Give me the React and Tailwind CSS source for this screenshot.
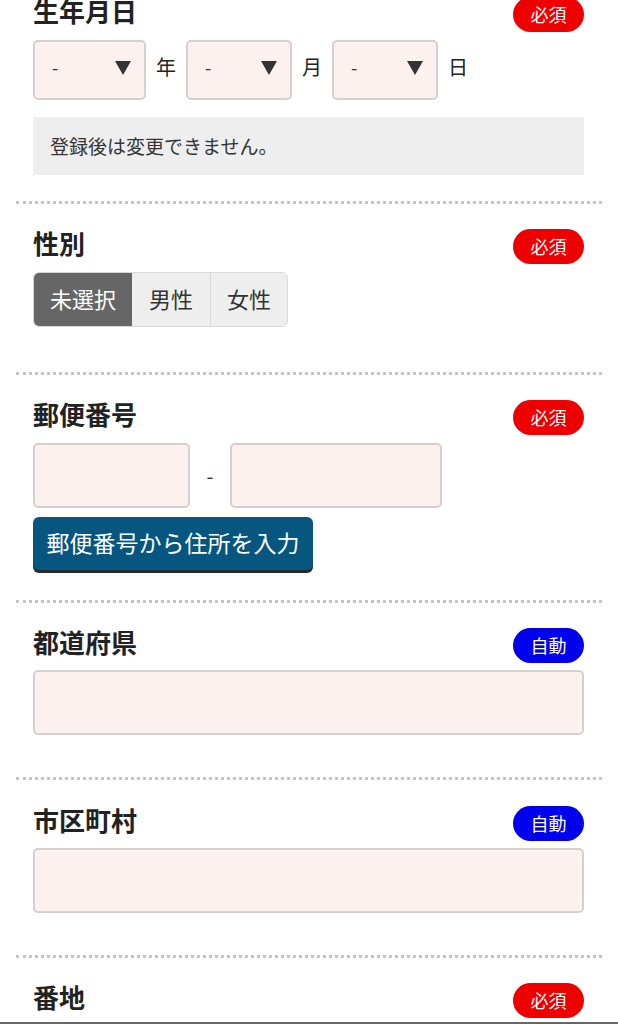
import React from "react";

const font = { fontFamily: '"Noto Sans CJK JP", "Noto Sans", sans-serif' };

const Badge = ({ kind }) => (
  <span
    className={
      "flex h-[35px] w-[71px] items-center justify-center rounded-full text-[18px] text-white " +
      (kind === "auto" ? "bg-[#0000ee]" : "bg-[#ee0000]")
    }
  >
    {kind === "auto" ? "自動" : "必須"}
  </span>
);

const Header = ({ title, kind }) => (
  <div className="flex h-[35px] items-center justify-between">
    <h2 className="pb-[8px] text-[26px] font-bold leading-none text-[#222]">{title}</h2>
    <Badge kind={kind} />
  </div>
);

const Select = ({ w }) => (
  <div
    className={
      "flex h-[60px] items-center justify-between rounded-[5px] border-2 border-[#d6cfcf] bg-[#fdf1f0] pb-[5px] pl-[17px] pr-[13px] " +
      w
    }
  >
    <span className="text-[18px] text-[#333]">-</span>
    <svg width="16" height="14" viewBox="0 0 16 14">
      <polygon points="0,0 16,0 8,14" fill="#333" />
    </svg>
  </div>
);

const Field = ({ w = "w-full" }) => (
  <div className={"h-[65px] rounded-[5px] border-2 border-[#d6cfcf] bg-[#fdf1f0] " + w} />
);

const Section = ({ children, className = "" }) => (
  <section
    className={
      "mx-4 border-t-[3px] border-dotted border-[#c4c4c4] pl-[17px] pr-[18px] " + className
    }
  >
    {children}
  </section>
);

export default function App() {
  return (
    <div className="h-[1024px] overflow-hidden bg-white text-[#222]" style={font}>
      {/* 生年月日 */}
      <section className="mx-4 -mt-[3px] pb-[26px] pl-[17px] pr-[18px]">
        <Header title="生年月日" kind="req" />
        <div className="mt-[8px] flex items-center text-[20px]">
          <Select w="w-[113px]" />
          <span className="mx-[10px] pb-[6px]">年</span>
          <Select w="w-[106px]" />
          <span className="mx-[10px] pb-[6px]">月</span>
          <Select w="w-[106px]" />
          <span className="mx-[10px] pb-[6px]">日</span>
        </div>
        <div className="mt-[17px] flex h-[58px] items-center bg-[#eeeeee] px-[17px] text-[19px] text-[#333]">
          登録後は変更できません。
        </div>
      </section>

      {/* 性別 */}
      <Section className="pt-[25px] pb-[45px]">
        <Header title="性別" kind="req" />
        <div className="mt-[8px] flex h-[55px] w-max overflow-hidden rounded-[6px] border border-[#d8d8d8] text-[22px]">
          <span className="flex items-center bg-[#666666] px-[16px] pb-[2px] text-white">未選択</span>
          <span className="flex items-center border-r border-[#d8d8d8] bg-[#eeeeee] px-[17px] pb-[2px] text-[#333]">男性</span>
          <span className="flex items-center bg-[#eeeeee] px-[16px] pb-[2px] text-[#333]">女性</span>
        </div>
      </Section>

      {/* 郵便番号 */}
      <Section className="pt-[25px] pb-[30px]">
        <Header title="郵便番号" kind="req" />
        <div className="mt-[8px] flex items-center">
          <Field w="w-[157px]" />
          <span className="w-[40px] text-center text-[20px] text-[#333]">-</span>
          <Field w="w-[212px]" />
        </div>
        <button className="mt-[9px] flex h-[53px] w-[280px] items-center justify-center rounded-[6px] bg-[#075680] pb-[3px] text-[23px] text-white shadow-[0_3px_0_#2a2a2a]">
          郵便番号から住所を入力
        </button>
      </Section>

      {/* 都道府県 */}
      <Section className="pt-[25px] pb-[42px]">
        <Header title="都道府県" kind="auto" />
        <div className="mt-[7px]">
          <Field />
        </div>
      </Section>

      {/* 市区町村 */}
      <Section className="pt-[26px] pb-[42px]">
        <Header title="市区町村" kind="auto" />
        <div className="mt-[7px]">
          <Field />
        </div>
      </Section>

      {/* 番地 */}
      <Section className="pt-[25px]">
        <Header title="番地" kind="req" />
      </Section>
      <div className="mt-[4px] h-[2px] bg-[#666666]" />
    </div>
  );
}
